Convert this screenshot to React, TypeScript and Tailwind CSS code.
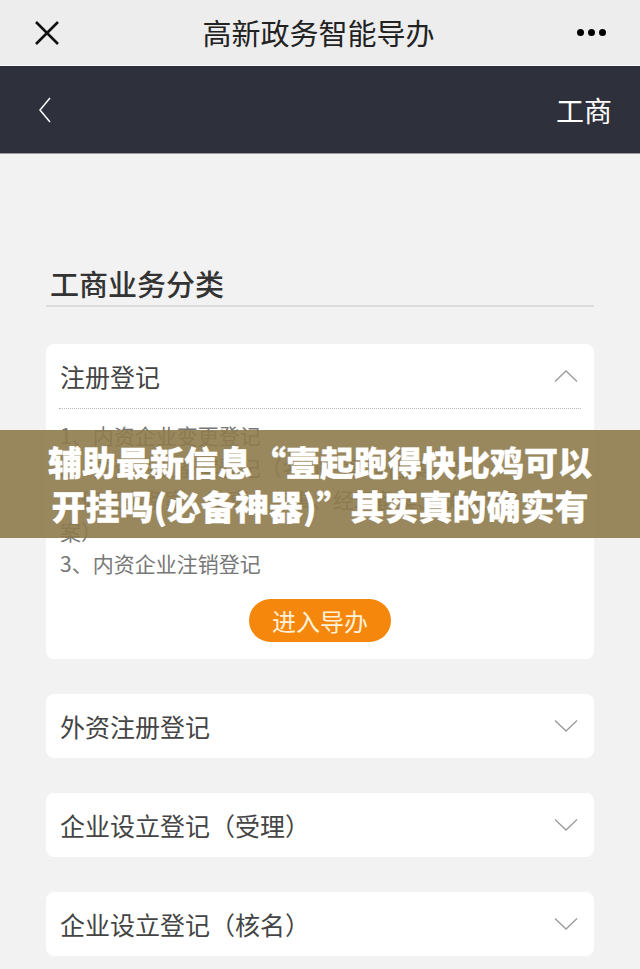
import React from "react";

const font = { fontFamily: '"Noto Sans CJK SC", "Noto Sans", sans-serif' };

function ChevronDown() {
  return (
    <svg width="24" height="14" viewBox="0 0 24 14" fill="none">
      <path d="M1 1.5 L12 12 L23 1.5" stroke="#9a9a9a" strokeWidth="1.3" />
    </svg>
  );
}
function ChevronUp() {
  return (
    <svg width="24" height="14" viewBox="0 0 24 14" fill="none">
      <path d="M1 12.5 L12 2 L23 12.5" stroke="#9a9a9a" strokeWidth="1.3" />
    </svg>
  );
}

function Card({ title }: { title: string }) {
  return (
    <div className="bg-white rounded-[8px] h-[64px] flex items-center justify-between pl-[14px] pr-[16px]">
      <span className="text-[25px] text-[#444] leading-none">{title}</span>
      <ChevronDown />
    </div>
  );
}

export default function App() {
  return (
    <div className="w-[640px] h-[969px] overflow-hidden bg-[#f2f2f2] relative" style={font}>
      {/* top bar */}
      <div className="h-[66px] bg-[#ededed] flex items-center justify-between px-[34px] border-b border-[#fafafa]">
        <svg width="26" height="26" viewBox="0 0 26 26">
          <path d="M2 2 L24 24 M24 2 L2 24" stroke="#111" strokeWidth="2.6" />
        </svg>
        <span className="text-[29px] text-[#222] leading-none">高新政务智能导办</span>
        <div className="flex gap-[4px] items-center">
          <span className="w-[7px] h-[7px] rounded-full bg-black" />
          <span className="w-[7px] h-[7px] rounded-full bg-black" />
          <span className="w-[7px] h-[7px] rounded-full bg-black" />
        </div>
      </div>
      {/* dark header */}
      <div className="h-[88px] bg-[#2e313c] flex items-center justify-between pl-[38px] pr-[28px] border-b border-[#9a9a9a]">
        <svg width="14" height="28" viewBox="0 0 14 28">
          <path d="M12 2 L2 14 L12 26" stroke="#fff" strokeWidth="1.5" fill="none" />
        </svg>
        <span className="text-[28px] text-white leading-none">工商</span>
      </div>

      <div className="px-[46px] pt-[115px]">
        <div className="border-b-2 border-[#dcdcdc] pb-[4px] pl-[4px]">
          <span className="text-[29px] text-[#333] leading-none font-medium">工商业务分类</span>
        </div>

        <div className="mt-[37px] bg-white rounded-[8px] px-[13px] pb-[17px]">
          <div className="h-[64px] flex items-center justify-between pl-[1px] pr-[3px]">
            <span className="text-[25px] text-[#444] leading-none">注册登记</span>
            <ChevronUp />
          </div>
          <div className="border-t border-dotted border-[#bbb]" />
          <div className="pt-[10px] text-[21px] text-[#777] leading-[32px] pl-[1px] pr-[4px] whitespace-nowrap">
            <div>1、内资企业变更登记</div>
            <div>2、内资企业备案登记（名称、章程备案、章</div>
            <div>程修正案备案、董事、监事、经理备案、联络员备</div>
            <div>案）</div>
            <div>3、内资企业注销登记</div>
          </div>
          <div className="flex justify-center mt-[20px]">
            <button className="w-[142px] h-[43px] rounded-full bg-[#f6870d] text-[#fff1da] text-[24px] leading-none">
              进入导办
            </button>
          </div>
        </div>

        <div className="mt-[35px] flex flex-col gap-[35px]">
          <Card title="外资注册登记" />
          <Card title="企业设立登记（受理）" />
          <Card title="企业设立登记（核名）" />
        </div>
      </div>

      {/* overlay banner */}
      <div className="absolute left-0 top-[430px] w-[640px] h-[108px] bg-[#8e7a4c]/90 flex flex-col items-center justify-center">
        <div className="text-white font-black text-[34px] leading-[44px] text-center whitespace-nowrap [-webkit-text-stroke:0.3px_white]">
          辅助最新信息“壹起跑得快比鸡可以
        </div>
        <div className="text-white font-black text-[34px] leading-[44px] text-center whitespace-nowrap [-webkit-text-stroke:0.3px_white]">
          开挂吗(必备神器)”其实真的确实有
        </div>
      </div>
    </div>
  );
}
